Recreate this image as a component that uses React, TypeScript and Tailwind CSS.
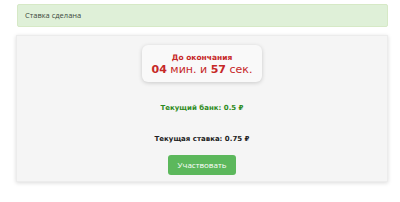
export default function App() {
  return (
    <div className="w-[400px] h-[202px] bg-white pt-[4px]" style={{ fontFamily: '"Open Sans", sans-serif' }}>
      <div className="ml-[17px] w-[371px] h-[23px] bg-[#dff0d8] border border-[#d6e9c6] rounded-[2px] flex items-center pl-[7px] text-[7.5px] text-[#3d4a3d]">
        Ставка сделана
      </div>
      <div className="ml-[16px] mt-[8px] w-[372px] h-[147px] bg-[#f5f5f5] border border-[#ececec] shadow-[0_1px_4px_rgba(0,0,0,0.15)] flex flex-col items-center pt-[9px]">
        <div className="w-[120px] h-[37px] bg-[#f9f9f9] rounded-[6px] shadow-[0_1px_4px_rgba(0,0,0,0.18)] flex flex-col items-center justify-center pt-[2px] text-[#c62828]" style={{ fontFamily: '"DejaVu Sans", Verdana, sans-serif' }}>
          <div className="text-[7.5px] font-bold leading-[10px]">До окончания</div>
          <div className="text-[11px] leading-[13px]">
            <span className="font-bold">04</span> мин. и <span className="font-bold">57</span> сек.
          </div>
        </div>
        <div className="mt-[21px] text-[7px] font-bold text-[#2e8b22]" style={{ fontFamily: '"DejaVu Sans", Verdana, sans-serif' }}>
          Текущий банк: 0.5 ₽
        </div>
        <div className="mt-[20px] text-[7px] font-bold text-[#222]" style={{ fontFamily: '"DejaVu Sans", Verdana, sans-serif' }}>
          Текущая ставка: 0.75 ₽
        </div>
        <button className="mt-[11px] w-[68px] h-[20px] bg-[#5cb85c] rounded-[3px] text-white text-[8px] flex items-center justify-center">
          Участвовать
        </button>
      </div>
    </div>
  );
}
